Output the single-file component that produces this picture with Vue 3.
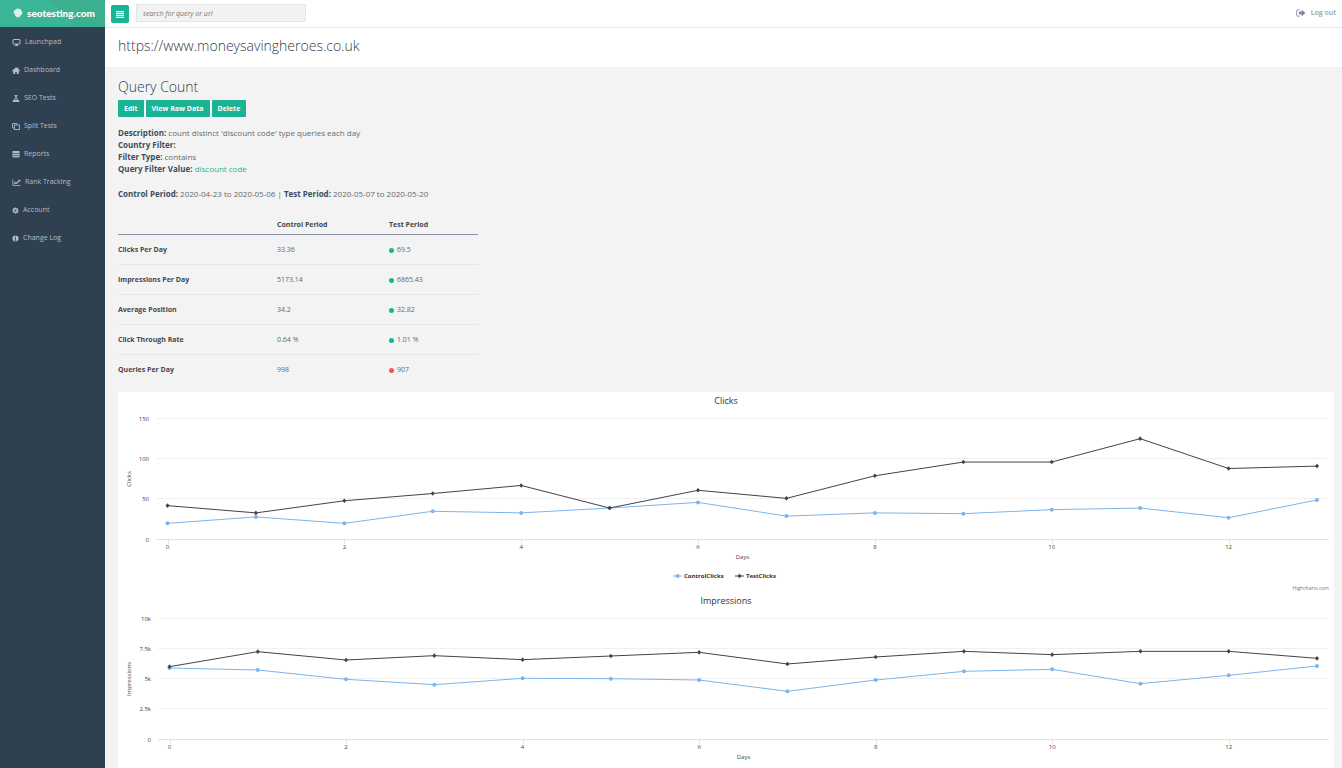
<script setup>
import { ref, onMounted, onBeforeUnmount } from 'vue'

const nav = [
  { label: 'Launchpad', icon: 'desktop', w: 9 },
  { label: 'Dashboard', icon: 'home', w: 8 },
  { label: 'SEO Tests', icon: 'flask', w: 8 },
  { label: 'Split Tests', icon: 'copy', w: 8 },
  { label: 'Reports', icon: 'table', w: 8 },
  { label: 'Rank Tracking', icon: 'chart', w: 9 },
  { label: 'Account', icon: 'gear', w: 7 },
  { label: 'Change Log', icon: 'info', w: 7 },
]

const rows = [
  { label: 'Clicks Per Day', control: '33.36', test: '69.5', up: true },
  { label: 'Impressions Per Day', control: '5173.14', test: '6865.43', up: true },
  { label: 'Average Position', control: '34.2', test: '32.82', up: true },
  { label: 'Click Through Rate', control: '0.64 %', test: '1.01 %', up: true },
  { label: 'Queries Per Day', control: '998', test: '907', up: false },
]

const charts = [
  {
    title: 'Clicks', max: 150, left: 38,
    ticks: [[150, '150'], [100, '100'], [50, '50'], [0, '0']],
    control: [20, 28, 20, 35, 33, 39, 46, 29, 33, 32, 37, 39, 27, 49],
    test: [42, 33, 48, 57, 67, 39, 61, 51, 79, 96, 96, 125, 88, 91],
    legend: ['ControlClicks', 'TestClicks'],
  },
  {
    title: 'Impressions', max: 10000, left: 40,
    ticks: [[10000, '10k'], [7500, '7.5k'], [5000, '5k'], [2500, '2.5k'], [0, '0']],
    control: [5909, 5744, 4972, 4532, 5055, 5027, 4917, 3981, 4917, 5634, 5799, 4614, 5303, 6074],
    test: [6019, 7259, 6570, 6928, 6598, 6901, 7204, 6240, 6818, 7286, 7011, 7286, 7286, 6708],
    legend: null,
  },
]

const card = ref(null)
const width = ref(1216)
let observer
onMounted(() => {
  const measure = () => { width.value = card.value.clientWidth }
  measure()
  observer = new ResizeObserver(measure)
  observer.observe(card.value)
})
onBeforeUnmount(() => observer.disconnect())

const BASE = 147.5
const PLOT = 121
const px = (c, i) => c.left + 11.5 + (i * (width.value - 5 - c.left - 23.5)) / 13
const py = (c, v) => BASE - (v / c.max) * PLOT
const line = (c, s) => s.map((v, i) => `${px(c, i)},${py(c, v)}`).join(' ')
const mid = (c) => (c.left + width.value - 5) / 2
const diamond = (x, y) => `M${x} ${y - 2.3}L${x + 2} ${y}L${x} ${y + 2.3}L${x - 2} ${y}Z`
</script>

<template>
  <div class="shell">
    <aside class="sidebar">
      <a class="brand" href="#">
        <svg class="brand-mark" viewBox="0 0 20 20" aria-hidden="true">
          <path d="M2 6Q2 3 6 3Q8 0 11 1.500Q16 1 17 5Q20 9 17 13Q14 19 9 19Q4 17 3 12Q0 9 2 6Z" fill="#d5f2ea" />
        </svg>
        <span>seotesting.com</span>
      </a>
      <nav>
        <a v-for="n in nav" :key="n.label" href="#" class="nav-link">
          <svg viewBox="0 0 16 14" class="nav-icon" :class="'w' + n.w" aria-hidden="true">
            <g v-if="n.icon === 'desktop'">
              <rect x="1" y="1" width="14" height="9" rx="1" fill="none" stroke="currentColor" stroke-width="2" />
              <path d="M6.500 10h3l.5 2.500h1.500V14h-7v-1.500H6z" fill="currentColor" />
            </g>
            <path v-else-if="n.icon === 'home'" d="M8 .5l2.500 2.200V1.500H13v3.400L16 7.700 14.900 9 13.500 7.900V14H9.500V10h-3v4H2.500V7.900L1.100 9 0 7.700z" fill="currentColor" />
            <path v-else-if="n.icon === 'flask'" d="M5 0h6v1.500h-1V6l4.500 6q1 2-1 2h-11q-2 0-1-2L6 6V1.500H5zM7.500 1.500v5L5.200 9.500h5.600L8.500 6.500v-5z" fill="currentColor" />
            <g v-else-if="n.icon === 'copy'" fill="none" stroke="currentColor" stroke-width="1.700">
              <path d="M4 10H1V1h9v2.500" />
              <rect x="5" y="4" width="10" height="9" />
            </g>
            <path v-else-if="n.icon === 'table'" fill-rule="evenodd" d="M2 0h12q1 0 1 1v11q0 1-1 1H2q-1 0-1-1V1q0-1 1-1zM2.500 4v2h2.800V4zM6.600 4v2h2.800V4zM10.700 4v2h2.800V4zM2.500 8.500v2h2.800v-2zM6.600 8.500v2h2.800v-2zM10.700 8.500v2h2.800v-2z" fill="currentColor" />
            <path v-else-if="n.icon === 'chart'" d="M0 1h1.500v11H16v1.500H0zM2.500 9L6 5.200l2 2L12.200 3 11 1.500h4.500V6L13.900 4.600 8 10.500l-2-2-2.300 2.300z" fill="currentColor" />
            <path v-else-if="n.icon === 'gear'" fill-rule="evenodd" d="M7 0h2l.4 2 1.400.6 1.800-1.200 1.400 1.400-1.200 1.800.6 1.400 2 .4v2l-2 .4-.6 1.400 1.200 1.800-1.400 1.400-1.800-1.200-1.400.6L9 14H7l-.4-2-1.400-.6-1.800 1.200L2 11.200l1.200-1.800L2.600 8l-2-.4v-2l2-.4.600-1.400L2 2l1.400-1.400 1.800 1.200L6.600 2zM8 4.800a2.200 2.200 0 100 4.400 2.200 2.200 0 000-4.400z" fill="currentColor" />
            <path v-else fill-rule="evenodd" d="M8 0a7 7 0 110 14A7 7 0 018 0zM7 2v2h2V2zM6 5.500V7h1v3.500H6V12h4v-1.500H9v-5z" fill="currentColor" />
          </svg>
          <span>{{ n.label }}</span>
        </a>
      </nav>
    </aside>

    <div class="page">
      <header class="topbar">
        <button class="menu" type="button" aria-label="Toggle navigation">
          <svg viewBox="0 0 8 7" aria-hidden="true"><path d="M0 0h8v1.200H0zM0 2h8v1.200H0zM0 4h8v1.200H0zM0 6h8v1H0z" fill="#fff" /></svg>
        </button>
        <input class="search" type="text" placeholder="search for query or url" aria-label="Search for query or url" />
        <a class="logout" href="#">
          <svg viewBox="0 0 20 16" aria-hidden="true">
            <path d="M7 1.500H3.500q-2 0-2 2v9q0 2 2 2H7" fill="none" stroke="#8b93a3" stroke-width="2" />
            <path d="M6 5h5.500V1.500L19 8l-7.500 6.500V11H6z" fill="#8088a0" />
          </svg>
          <span>Log out</span>
        </a>
      </header>

      <div class="site-heading"><h1>https://www.moneysavingheroes.co.uk</h1></div>

      <main class="content">
        <h2>Query Count</h2>
        <div class="actions">
          <button type="button">Edit</button>
          <button type="button">View Raw Data</button>
          <button type="button">Delete</button>
        </div>

        <div class="details">
          <div><b>Description:</b> count distinct 'discount code' type queries each day</div>
          <div><b>Country Filter:</b></div>
          <div><b>Filter Type:</b> contains</div>
          <div><b>Query Filter Value:</b> <span class="value">discount code</span></div>
        </div>
        <div class="periods"><b>Control Period:</b> 2020-04-23 to 2020-05-06 | <b>Test Period:</b> 2020-05-07 to 2020-05-20</div>

        <table class="stats">
          <thead>
            <tr><td></td><th scope="col">Control Period</th><th scope="col">Test Period</th></tr>
          </thead>
          <tbody>
            <tr v-for="r in rows" :key="r.label">
              <th scope="row">{{ r.label }}</th>
              <td>{{ r.control }}</td>
              <td><span class="cell"><i class="dot" :class="{ down: !r.up }"></i>{{ r.test }}</span></td>
            </tr>
          </tbody>
        </table>

        <div ref="card" class="card">
          <svg v-for="c in charts" :key="c.title" class="chart" role="img" :aria-label="c.title">
            <text class="title" :x="width / 2" y="12">{{ c.title }}</text>
            <g v-for="t in c.ticks" :key="t[1]">
              <line :x1="c.left" :x2="width - 5" :y1="Math.round(py(c, t[0])) - 0.5" :y2="Math.round(py(c, t[0])) - 0.5" :class="t[0] ? 'grid' : 'axis'" />
              <text class="tick end" :x="c.left - 7" :y="py(c, t[0]) + 2">{{ t[1] }}</text>
            </g>
            <g v-for="i in 7" :key="i">
              <line class="axis" :x1="Math.round(px(c, 2 * i - 2)) + 0.5" :x2="Math.round(px(c, 2 * i - 2)) + 0.5" y1="147" y2="152" />
              <text class="tick" :x="px(c, 2 * i - 2)" y="157">{{ 2 * i - 2 }}</text>
            </g>
            <text class="tick" :x="mid(c)" y="167">Days</text>
            <text class="tick" :transform="`translate(13 ${BASE - PLOT / 2}) rotate(-90)`">{{ c.title }}</text>
            <polyline :points="line(c, c.control)" class="control" />
            <circle v-for="(v, i) in c.control" :key="'c' + i" :cx="px(c, i)" :cy="py(c, v)" r="2" class="control-mark" />
            <polyline :points="line(c, c.test)" class="test" />
            <path v-for="(v, i) in c.test" :key="'t' + i" :d="diamond(px(c, i), py(c, v))" class="test-mark" />
            <g v-if="c.legend" :transform="`translate(${width / 2} 184)`">
              <path d="M-53 0h9" class="control" /><circle cx="-48.500" cy="0" r="2" class="control-mark" />
              <text class="legend" x="-42" y="2">{{ c.legend[0] }}</text>
              <path d="M9 0h9" class="test" /><path :d="diamond(13.5, 0)" class="test-mark" />
              <text class="legend" x="20" y="2">{{ c.legend[1] }}</text>
            </g>
            <text v-if="c.legend" class="credit" :x="width - 5" y="198">Highcharts.com</text>
          </svg>
        </div>
      </main>
    </div>
  </div>
</template>

<style>
html, body { background: #f3f3f3; }
body { margin: 0; }
</style>

<style scoped>
* { box-sizing: border-box; }
.shell {
  display: flex;
  height: 100vh;
  overflow: hidden;
  font-family: "Open Sans", "Liberation Sans", sans-serif;
  font-size: 8px;
  line-height: 12px;
  color: #676a6c;
  background: #f3f3f3;
}
a { text-decoration: none; color: inherit; }
.sidebar { flex: none; width: 105px; background: #2f4050; }
.brand {
  display: flex;
  align-items: center;
  gap: 4px;
  height: 27px;
  padding: 0 8px 2px 13px;
  color: #fff;
  font: 900 10px/12px Lato, "Open Sans", sans-serif;
  background: linear-gradient(45deg, #3bb497 0 57%, #3bb08f 57%);
}
.brand-mark { width: 10px; height: 10px; flex: none; }
.nav-link {
  display: flex;
  align-items: center;
  gap: 4px;
  height: 28px;
  padding: 2px 0 0 12px;
  font-size: 7px;
  font-weight: 400;
  color: #b4bdcc;
}
.nav-icon { height: 7px; flex: none; }
.w7 { width: 7px; }
.w8 { width: 8px; }
.w9 { width: 9px; }
.page { flex: 1; min-width: 0; }
.topbar {
  display: flex;
  align-items: flex-start;
  height: 28px;
  padding: 4px 6px 0;
  background: #fff;
  border-bottom: 1px solid #e7eaec;
}
button { border: 0; background: #1ab394; color: #fff; font-family: inherit; cursor: pointer; }
.menu {
  display: flex;
  align-items: center;
  justify-content: center;
  width: 18px;
  height: 18px;
  margin-top: 1px;
  padding: 1px 0 0;
  border-radius: 2px;
}
.menu svg { width: 8px; height: 7px; }
.search {
  width: 170px;
  height: 18px;
  margin-left: 7px;
  padding: 0 6px;
  border: 1px solid #e5e6e7;
  background: #f2f2f2;
  font: italic 7px/12px "Open Sans", sans-serif;
  color: #676a6c;
}
.search::placeholder { color: #777; opacity: 1; }
.logout {
  display: flex;
  align-items: center;
  gap: 5px;
  margin-left: auto;
  height: 18px;
  font-size: 7px;
  font-weight: 600;
  color: #999c9e;
}
.logout svg { width: 10px; height: 8px; }
.site-heading { height: 39px; padding: 8px 13px; background: #fff; }
h1, h2 { margin: 0; font-weight: 300; color: #2f4050; }
h1 { font-size: 14px; line-height: 20px; }
h2 { font-size: 14px; line-height: 20px; }
.content { padding: 10px 8px 0 13px; }
.actions { display: flex; gap: 2px; margin-top: 3px; }
.actions button {
  height: 17px;
  padding: 0 6px;
  border-radius: 1px;
  font-size: 7px;
  line-height: 12px;
  font-weight: 700;
}
.details { margin-top: 10px; }
b { font-weight: 700; color: #3e4c5c; }
.value { color: #1ab394; }
.periods { margin-top: 13px; }
.stats {
  width: 360px;
  margin-top: 14px;
  border-collapse: collapse;
  table-layout: fixed;
  font-size: 7px;
  line-height: 10px;
}
.stats th, .stats td { height: 30px; padding: 2px 0 0; text-align: left; vertical-align: middle; }
.stats th { font-weight: 700; color: #45484c; }
.stats thead td { width: 159px; }
.stats thead th { width: 112px; }
.stats thead th:last-child { width: 89px; }
.stats thead th, .stats thead td { height: 20px; border-bottom: 1px solid #8a90a8; }
.stats tbody tr + tr th, .stats tbody tr + tr td { border-top: 1px solid #e3e6ea; }
.cell { display: flex; align-items: center; gap: 3px; }
.dot { width: 5px; height: 5px; border-radius: 50%; background: #1ab394; }
.dot.down { background: #ed5565; }
.card { margin-top: 8px; background: #fff; }
.chart { display: block; width: 100%; height: 200px; }
.title { font-size: 9px; fill: #333; text-anchor: middle; }
.tick { font-size: 6px; fill: #444; text-anchor: middle; }
.end { text-anchor: end; }
.legend { font-size: 6px; font-weight: 700; fill: #333; }
.credit { font-size: 5px; fill: #777; text-anchor: end; }
.grid { stroke: #f0f0f0; stroke-width: 1; }
.axis { stroke: #e0e3f0; stroke-width: 1; }
.control { fill: none; stroke: #7cb5ec; stroke-width: 1; }
.control-mark { fill: #7cb5ec; }
.test { fill: none; stroke: #434348; stroke-width: 1; }
.test-mark { fill: #434348; }
</style>
